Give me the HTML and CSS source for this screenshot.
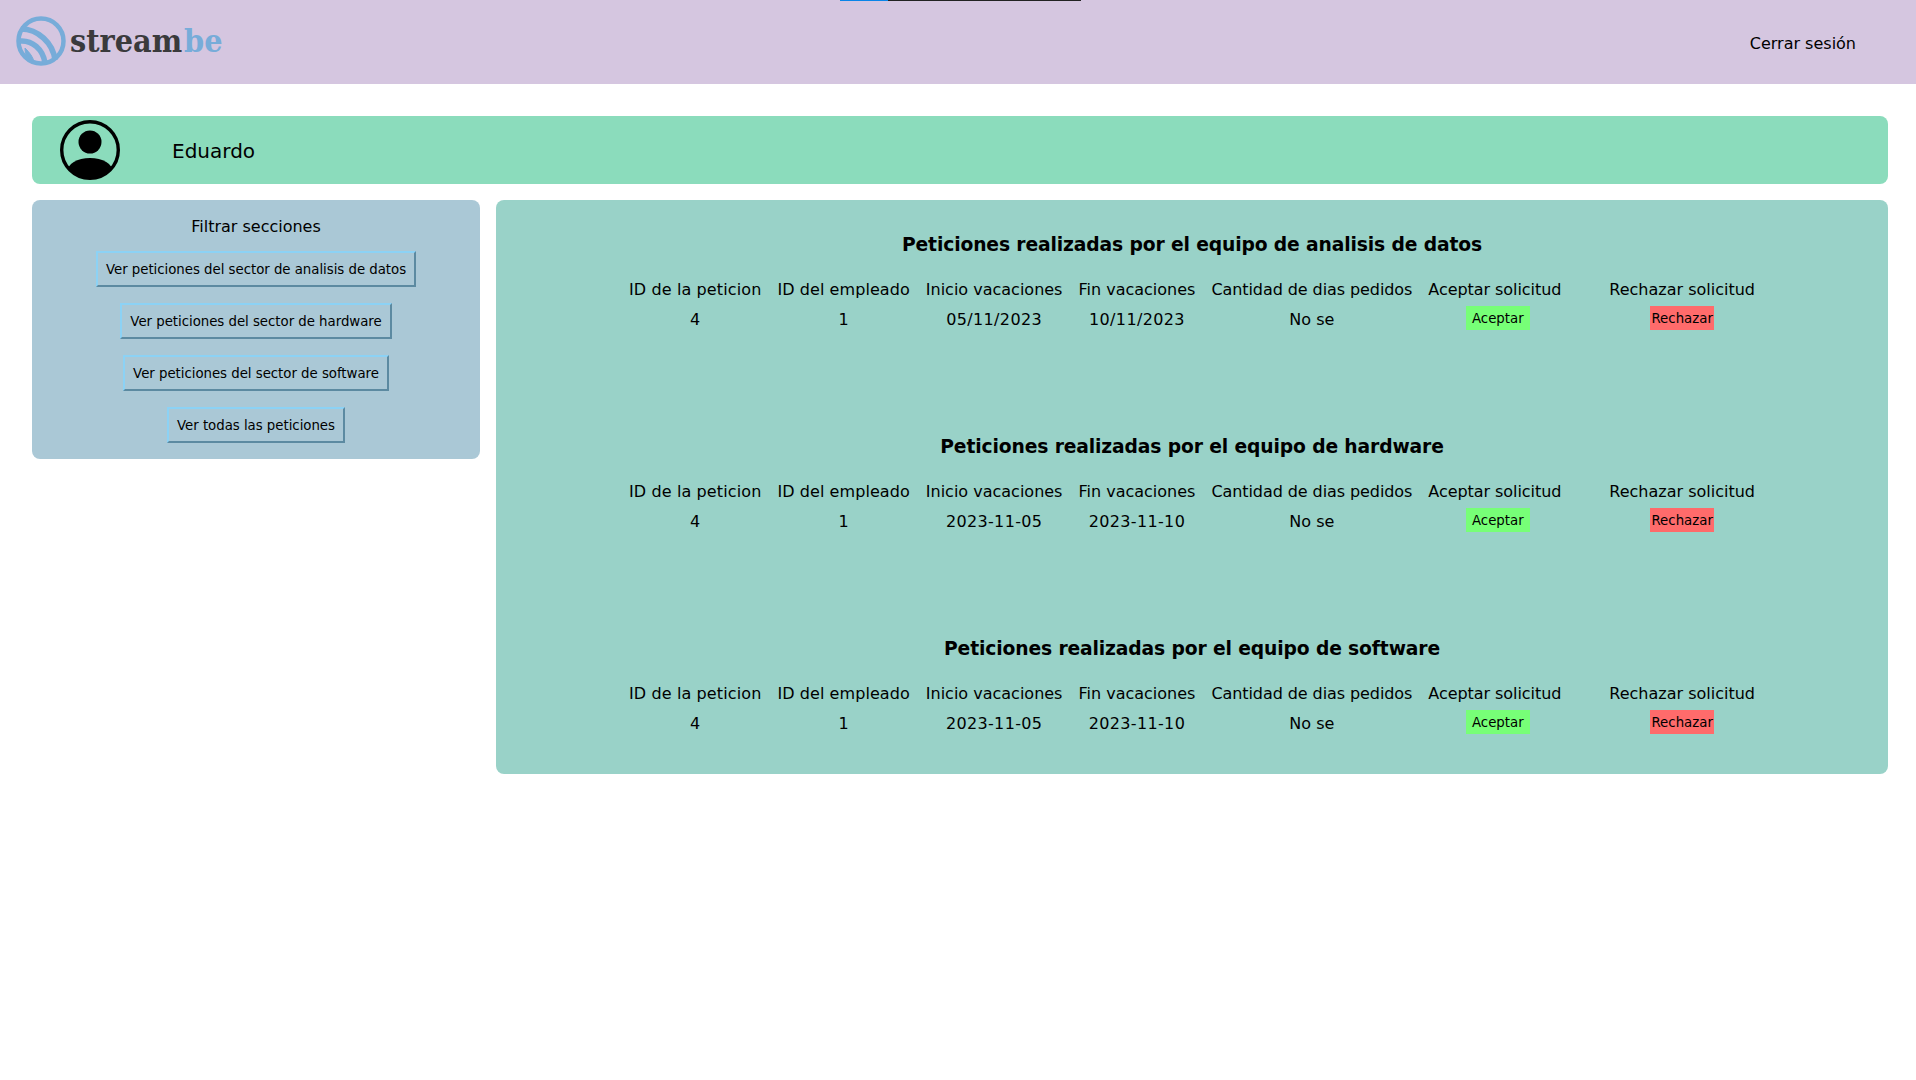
FILE: index.html
```html
<!DOCTYPE html>
<html lang="es">
<head>
<meta charset="utf-8">
<title>Peticiones</title>
<link rel="stylesheet" href="styles.css">
</head>
<body>
<div class="progress"><span class="progress-fill"></span></div>
<header class="topbar">
  <a class="logo" href="#">
    <svg class="logo-mark" viewBox="0 0 50 50" width="50" height="50" fill="none" stroke="#77acd9">
      <circle cx="25" cy="25" r="22.5" stroke-width="4.5"/>
      <path d="M5 13 C22 13 37 27 39 44" stroke-width="5.5"/>
      <path d="M4 25 C16 24 27 33 29 47" stroke-width="5.5"/>
      <path d="M9 32 C14 37 17 41 18 46 C12 44 9 39 9 32Z" fill="#77acd9" stroke-width="1"/>
    </svg>
    <span class="logo-text">stream<span class="logo-be">be</span></span>
  </a>
  <a class="logout" href="#">Cerrar sesión</a>
</header>
<main class="page">
  <section class="userbar">
    <svg class="avatar" viewBox="0 0 60 60" width="60" height="60">
      <defs><clipPath id="avatar-clip"><circle cx="30" cy="30" r="28"/></clipPath></defs>
      <circle cx="30" cy="22" r="11.5" fill="#000"/>
      <ellipse cx="30" cy="52" rx="23" ry="14" fill="#000" clip-path="url(#avatar-clip)"/>
      <circle cx="30" cy="30" r="28.3" fill="none" stroke="#000" stroke-width="3.4"/>
    </svg>
    <span class="username">Eduardo</span>
  </section>
  <div class="columns">
    <aside class="filters">
      <h3 class="filters-title">Filtrar secciones</h3>
      <button class="filter-btn">Ver peticiones del sector de analisis de datos</button>
      <button class="filter-btn">Ver peticiones del sector de hardware</button>
      <button class="filter-btn">Ver peticiones del sector de software</button>
      <button class="filter-btn">Ver todas las peticiones</button>
    </aside>
    <div class="requests">
      <section class="team">
        <h2 class="team-title">Peticiones realizadas por el equipo de analisis de datos</h2>
        <table class="team-table">
          <tr><th>ID de la peticion</th><th>ID del empleado</th><th>Inicio vacaciones</th><th>Fin vacaciones</th><th>Cantidad de dias pedidos</th><th class="accept-col">Aceptar solicitud</th><th>Rechazar solicitud</th></tr>
          <tr><td>4</td><td>1</td><td class="date">05/11/2023</td><td class="date">10/11/2023</td><td>No se</td><td class="accept-col"><button class="act act-yes">Aceptar</button></td><td><button class="act act-no">Rechazar</button></td></tr>
        </table>
      </section>
      <section class="team">
        <h2 class="team-title">Peticiones realizadas por el equipo de hardware</h2>
        <table class="team-table">
          <tr><th>ID de la peticion</th><th>ID del empleado</th><th>Inicio vacaciones</th><th>Fin vacaciones</th><th>Cantidad de dias pedidos</th><th class="accept-col">Aceptar solicitud</th><th>Rechazar solicitud</th></tr>
          <tr><td>4</td><td>1</td><td class="date">2023-11-05</td><td class="date">2023-11-10</td><td>No se</td><td class="accept-col"><button class="act act-yes">Aceptar</button></td><td><button class="act act-no">Rechazar</button></td></tr>
        </table>
      </section>
      <section class="team">
        <h2 class="team-title">Peticiones realizadas por el equipo de software</h2>
        <table class="team-table">
          <tr><th>ID de la peticion</th><th>ID del empleado</th><th>Inicio vacaciones</th><th>Fin vacaciones</th><th>Cantidad de dias pedidos</th><th class="accept-col">Aceptar solicitud</th><th>Rechazar solicitud</th></tr>
          <tr><td>4</td><td>1</td><td class="date">2023-11-05</td><td class="date">2023-11-10</td><td>No se</td><td class="accept-col"><button class="act act-yes">Aceptar</button></td><td><button class="act act-no">Rechazar</button></td></tr>
        </table>
      </section>
    </div>
  </div>
</main>
</body>
</html>
```
FILE: styles.css
```css
* { box-sizing: border-box; }
html, body { margin: 0; padding: 0; background: #fff; }
body { font-family: "DejaVu Sans", sans-serif; font-size: 16px; color: #000; position: relative; min-height: 1080px; }

.progress { position: absolute; top: 0; left: 840px; width: 241px; height: 1px; background: #222; }
.progress-fill { display: block; width: 48px; height: 100%; background: #0a84e8; }

.topbar { height: 84px; background: #d5c6e0; display: flex; align-items: center; justify-content: space-between; padding: 0 60px 0 16px; }
.logo { display: flex; align-items: center; gap: 4px; text-decoration: none; margin-top: -2px; }
.logo-mark { display: block; }
.logo-text { font-family: "DejaVu Serif Condensed", "DejaVu Serif", serif; font-weight: 700; font-size: 32px; letter-spacing: 0; color: #3a3a3c; }
.logo-be { color: #77acd9; margin-left: 2px; }
.logout { color: #000; text-decoration: none; margin-top: 2px; }

.page { padding: 32px 28px 0 32px; display: flex; flex-direction: column; gap: 16px; }
.userbar { height: 68px; background: #8bdcbc; border-radius: 8px; display: flex; align-items: center; padding-left: 28px; }
.avatar { display: block; }
.username { font-size: 20px; margin: 2px 0 0 52px; }

.columns { display: grid; grid-template-columns: 448px 1fr; gap: 16px; align-items: start; }

.filters { background: #aac8d6; border-radius: 8px; display: flex; flex-direction: column; align-items: center; gap: 16px; padding: 17px 0 16px; }
.filters-title { font-size: 16px; font-weight: 400; margin: 0 0 -2px; line-height: 20px; }
.filter-btn { font-family: inherit; font-size: 13.33px; letter-spacing: -0.03px; color: #000; height: 36px; padding: 0 8px; background: transparent; border: 2px outset #8cd2f5; border-radius: 0; }

.requests { background: #99d2c8; border-radius: 8px; padding: 33px 0 0; display: flex; flex-direction: column; align-items: center; height: 574px; }
.team { flex: none; height: 202px; display: flex; flex-direction: column; align-items: center; }
.team-title { font-size: 18.72px; letter-spacing: -0.125px; font-weight: 700; margin: 0 0 17px; line-height: 24px; }
.team-table { border-collapse: separate; border-spacing: 2px; }
.team-table th { font-weight: 400; padding: 4px 7px; line-height: 19px; }
.team-table th:nth-child(1) { letter-spacing: 0.12px; }
.team-table th:nth-child(2) { letter-spacing: 0.07px; }
.team-table th:nth-child(5) { letter-spacing: -0.08px; }
.team-table th:nth-child(6) { letter-spacing: -0.06px; }
.team-table td { text-align: center; padding: 2px 7px; line-height: 19px; }
.team-table td.date { letter-spacing: 0.35px; }
.team-table th.accept-col { padding-right: 39px; }
.team-table td.accept-col { padding-right: 33px; }
.act { display: block; margin: -1px auto 1px; font-family: inherit; font-size: 13.33px; color: #000; width: 64px; height: 24px; padding: 0; border: none; border-radius: 0; }
.act-yes { background: #77ff77; }
.act-no { background: #ff6b6b; }
```
